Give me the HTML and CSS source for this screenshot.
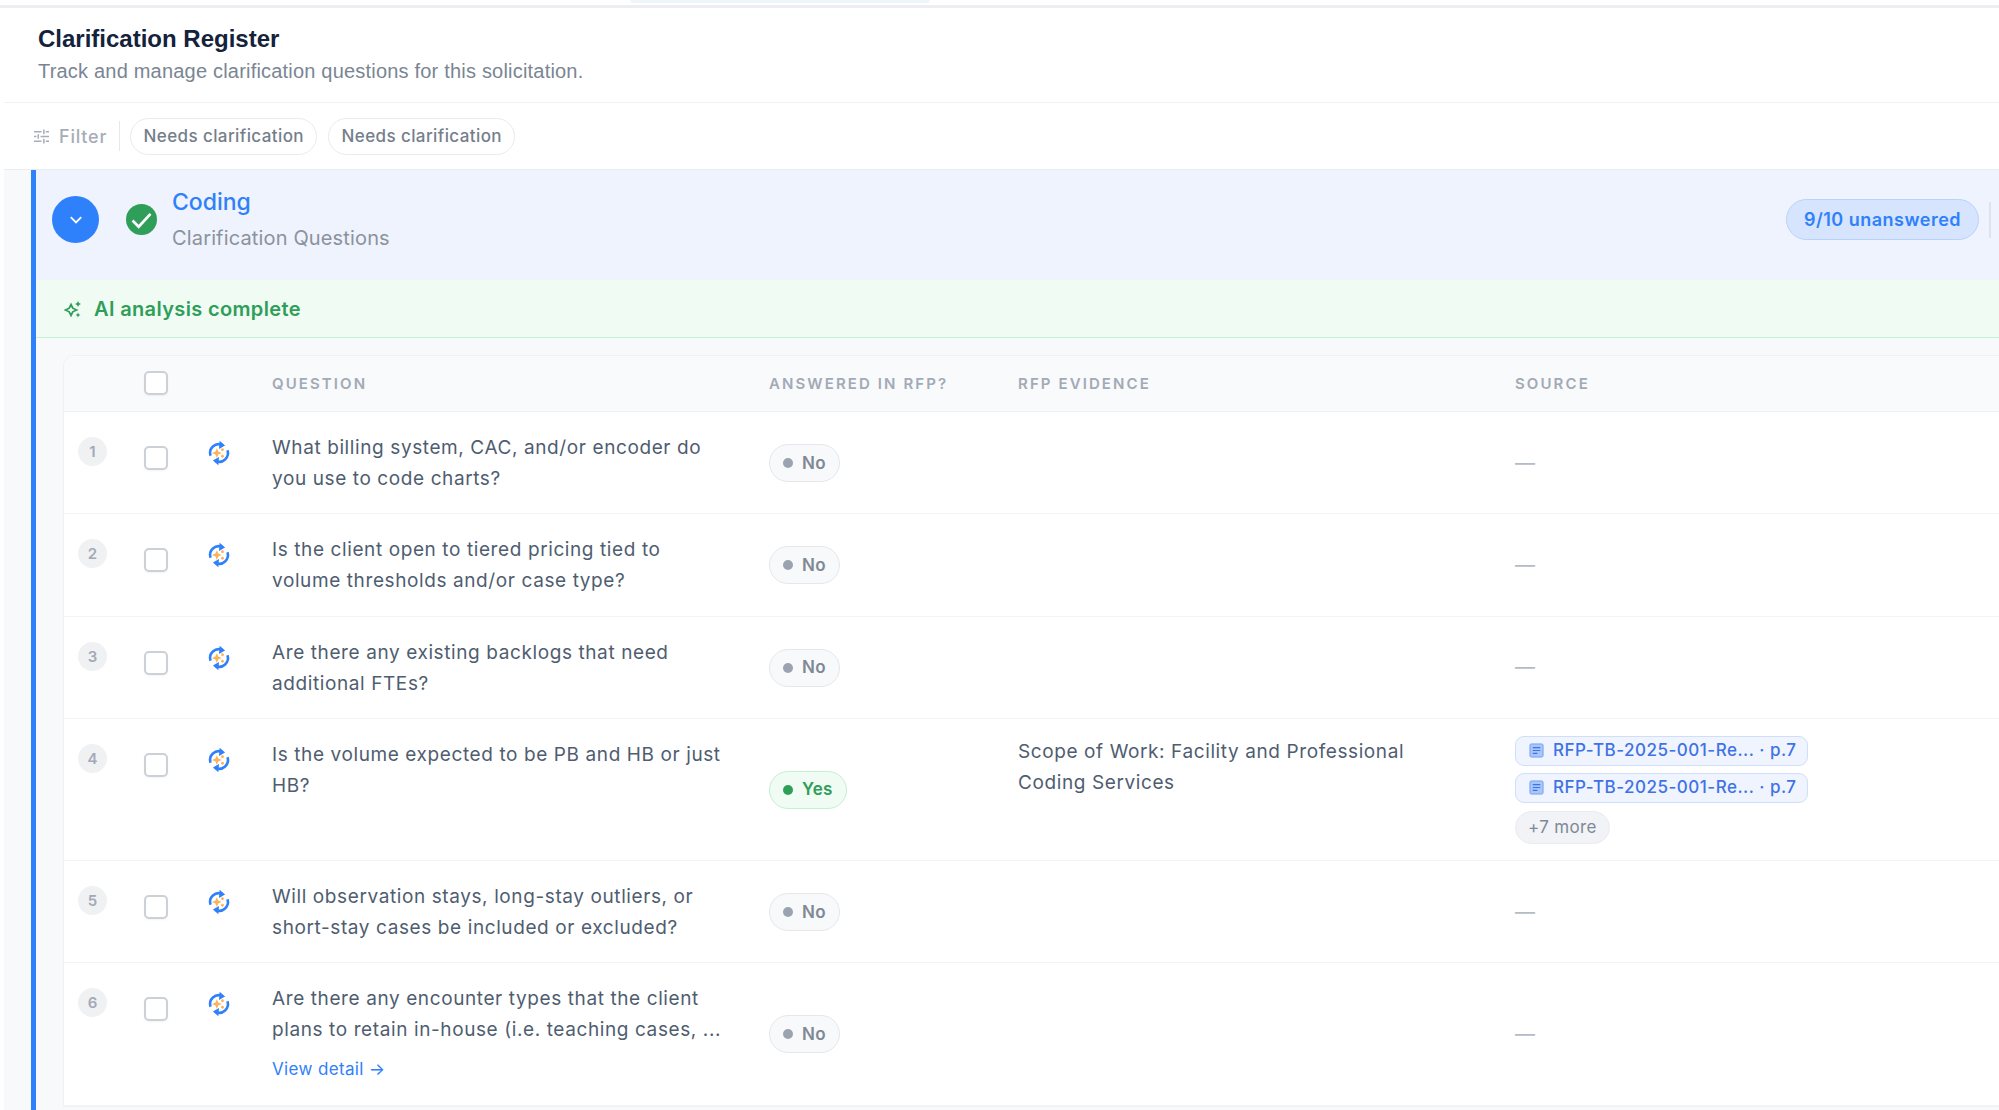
FILE: index.html
```html
<!DOCTYPE html>
<html lang="en">
<head>
  <meta charset="UTF-8">
  <title>Clarification Register</title>
  <link rel="stylesheet" href="styles.css">
</head>
<body>
  <svg class="defs" width="0" height="0">
    <symbol id="sync" viewBox="0 0 24 24">
      <path d="M4.2 14.5A8 8 0 0 1 15 4.6" fill="none" stroke="#2f80fb" stroke-width="2.4"/>
      <path d="M12.6 0.6 17.6 5 12 8.2z" fill="#2f80fb"/>
      <path d="M19.8 9.5A8 8 0 0 1 9 19.4" fill="none" stroke="#2f80fb" stroke-width="2.4"/>
      <path d="M11.4 23.4 6.4 19 12 15.8z" fill="#2f80fb"/>
      <path d="M10 7.5 11.3 10.7 14.5 12 11.3 13.3 10 16.5 8.7 13.3 5.5 12 8.7 10.7z" fill="#f9b45c"/>
      <circle cx="15.2" cy="9" r="1.3" fill="#f9b45c"/>
      <circle cx="15.2" cy="15" r="1.3" fill="#f9b45c"/>
    </symbol>
    <symbol id="doc" viewBox="0 0 16 16">
      <rect x="1" y="1" width="14" height="14" rx="1.5" fill="#a9c6fa" stroke="#6f9ff5"/>
      <path d="M4 5h8M4 8h8M4 11h5" stroke="#3f72e6" stroke-width="1.3"/>
    </symbol>
  </svg>

  <div class="top-strip"><span class="top-glow"></span></div>

  <header class="page-head">
    <h1>Clarification Register</h1>
    <p>Track and manage clarification questions for this solicitation.</p>
  </header>

  <div class="filter-bar">
    <svg class="filter-icon" viewBox="0 0 18 16" width="17" height="15">
      <path d="M1 3h8M13.5 3h3.5M11.5 .5v5M1 8h2.500M8 8h9M5.500 5.500v5M1 13h8M13.500 13h3.500M11.500 10.500v5" stroke="#a6adb8" stroke-width="1.6" fill="none"/>
    </svg>
    <span class="filter-label">Filter</span>
    <span class="filter-sep"></span>
    <span class="filter-chip">Needs clarification</span>
    <span class="filter-chip">Needs clarification</span>
  </div>

  <main class="content">
    <section class="group">
      <div class="group-head">
        <span class="toggle">
          <svg viewBox="0 0 12 8" width="14" height="10"><path d="M1.500 1.500 6 6l4.500-4.500" fill="none" stroke="#fff" stroke-width="1.6"/></svg>
        </span>
        <span class="done">
          <svg viewBox="0 0 20 16" width="23" height="18"><path d="M2 8.500 7.500 14 18 2.500" fill="none" stroke="#fff" stroke-width="2.400"/></svg>
        </span>
        <div class="group-title">
          <h2>Coding</h2>
          <p>Clarification Questions</p>
        </div>
        <span class="count-pill">9/10 unanswered</span>
        <span class="head-sep"></span>
      </div>

      <div class="ai-bar">
        <svg viewBox="0 0 18 18" width="18" height="18">
          <path d="M7 4.500 8.800 8.200 12.500 10 8.800 11.800 7 15.500 5.200 11.800 1.500 10 5.200 8.200z" fill="none" stroke="#2f9e58" stroke-width="1.800"/>
          <path d="M14 1 15 3 17 4 15 5 14 7 13 5 11 4 13 3zM14 12.500 14.800 14.200 16.500 15 14.800 15.800 14 17.500 13.200 15.800 11.500 15 13.200 14.200z" fill="#2f9e58"/>
        </svg>
        <span>AI analysis complete</span>
      </div>

      <div class="table">
        <div class="row head-row">
          <span class="cell-num"></span>
          <span class="box box-head"></span>
          <span class="cell-icon"></span>
          <span class="th">Question</span>
          <span class="th">Answered in RFP?</span>
          <span class="th">RFP Evidence</span>
          <span class="th">Source</span>
        </div>

        <div class="row">
          <span class="num">1</span>
          <span class="box"></span>
          <svg class="sync"><use href="#sync"/></svg>
          <div class="question">What billing system, CAC, and/or encoder do you use to code charts?</div>
          <div class="answer"><span class="badge"><i></i>No</span></div>
          <div class="evidence"></div>
          <div class="source"><span class="dash">—</span></div>
        </div>

        <div class="row">
          <span class="num">2</span>
          <span class="box"></span>
          <svg class="sync"><use href="#sync"/></svg>
          <div class="question">Is the client open to tiered pricing tied to volume thresholds and/or case type?</div>
          <div class="answer"><span class="badge"><i></i>No</span></div>
          <div class="evidence"></div>
          <div class="source"><span class="dash">—</span></div>
        </div>

        <div class="row">
          <span class="num">3</span>
          <span class="box"></span>
          <svg class="sync"><use href="#sync"/></svg>
          <div class="question">Are there any existing backlogs that need additional FTEs?</div>
          <div class="answer"><span class="badge"><i></i>No</span></div>
          <div class="evidence"></div>
          <div class="source"><span class="dash">—</span></div>
        </div>

        <div class="row">
          <span class="num">4</span>
          <span class="box"></span>
          <svg class="sync"><use href="#sync"/></svg>
          <div class="question">Is the volume expected to be PB and HB or just HB?</div>
          <div class="answer"><span class="badge badge-yes"><i></i>Yes</span></div>
          <div class="evidence">Scope of Work: Facility and Professional Coding Services</div>
          <div class="source source-list">
            <span class="doc-chip"><svg width="15" height="15"><use href="#doc"/></svg>RFP-TB-2025-001-Re... · p.7</span>
            <span class="doc-chip"><svg width="15" height="15"><use href="#doc"/></svg>RFP-TB-2025-001-Re... · p.7</span>
            <span class="more-chip">+7 more</span>
          </div>
        </div>

        <div class="row">
          <span class="num">5</span>
          <span class="box"></span>
          <svg class="sync"><use href="#sync"/></svg>
          <div class="question">Will observation stays, long-stay outliers, or short-stay cases be included or excluded?</div>
          <div class="answer"><span class="badge"><i></i>No</span></div>
          <div class="evidence"></div>
          <div class="source"><span class="dash">—</span></div>
        </div>

        <div class="row">
          <span class="num">6</span>
          <span class="box"></span>
          <svg class="sync"><use href="#sync"/></svg>
          <div class="question">
            Are there any encounter types that the client plans to retain in-house (i.e. teaching cases, ...
            <a class="detail" href="#">View detail →</a>
          </div>
          <div class="answer"><span class="badge"><i></i>No</span></div>
          <div class="evidence"></div>
          <div class="source"><span class="dash">—</span></div>
        </div>
      </div>
    </section>
  </main>
</body>
</html>
```

FILE: styles.css
```css
* {
  margin: 0;
  padding: 0;
  box-sizing: border-box;
}

html, body {
  height: 100%;
  overflow: hidden;
}

body {
  font-family: Inter, "Noto Sans", sans-serif;
  background-color: #fff;
  color: #4f5d70;
}

.defs {
  display: block;
  height: 0;
}

.top-strip {
  height: 8px;
  border-bottom: 3px solid #eceef1;
  position: relative;
}

.top-glow {
  position: absolute;
  left: 630px;
  top: 0;
  width: 300px;
  height: 3px;
  background-color: #eef6fc;
  border-radius: 0 0 8px 8px;
}

.page-head {
  height: 95px;
  margin-left: 4px;
  padding: 16px 0 0 34px;
  border-bottom: 1px solid #eef1f5;
}

.page-head h1 {
  font-family: "Liberation Sans", sans-serif;
  font-size: 24px;
  line-height: 30px;
  font-weight: 700;
  color: #14223b;
}

.page-head p {
  font-family: "Liberation Sans", sans-serif;
  font-size: 20px;
  line-height: 24px;
  margin-top: 5px;
  letter-spacing: 0.2px;
  color: #7a8594;
}

.filter-bar {
  height: 66px;
  margin-left: 4px;
  padding-left: 29px;
  display: flex;
  align-items: center;
}

.filter-label {
  margin-left: 9px;
  font-size: 18px;
  font-weight: 500;
  letter-spacing: 0.8px;
  color: #a6adb8;
}

.filter-sep {
  width: 1px;
  height: 30px;
  margin: 0 10px 0 12px;
  background-color: #e5e8ec;
}

.filter-chip {
  height: 37px;
  width: 187px;
  margin-right: 11px;
  display: flex;
  align-items: center;
  justify-content: center;
  border: 1px solid #e8ebef;
  border-radius: 19px;
  font-size: 17px;
  font-weight: 500;
  letter-spacing: 0.4px;
  color: #747e8b;
}

.content {
  margin-left: 4px;
  padding-left: 27px;
  background-color: #f8f9fb;
  border-top: 1px solid #e9edf3;
  height: 1000px;
}

.group {
  border-left: 5px solid #2f80fb;
  min-height: 100%;
}

.group-head {
  height: 110px;
  padding: 0 8px 11px 16px;
  display: flex;
  align-items: center;
  background-color: #eef3fd;
}

.toggle {
  width: 47px;
  height: 47px;
  border-radius: 50%;
  background-color: #2f80fb;
  display: flex;
  align-items: center;
  justify-content: center;
  flex-shrink: 0;
}

.done {
  width: 31px;
  height: 31px;
  margin-left: 27px;
  border-radius: 50%;
  background-color: #2f9e58;
  display: flex;
  align-items: center;
  justify-content: center;
  flex-shrink: 0;
}

.group-title {
  margin: -1px 0 0 15px;
  flex-grow: 1;
}

.group-title h2 {
  font-size: 23px;
  line-height: 30px;
  font-weight: 500;
  color: #2f80fb;
}

.group-title p {
  font-size: 20px;
  line-height: 26px;
  margin-top: 8px;
  letter-spacing: 0.15px;
  color: #8a929d;
}

.count-pill {
  width: 193px;
  height: 41px;
  display: flex;
  align-items: center;
  justify-content: center;
  border: 1px solid #b9d2fb;
  border-radius: 21px;
  background-color: #d6e5fd;
  font-size: 18px;
  font-weight: 600;
  letter-spacing: 0.5px;
  color: #2f80fb;
}

.head-sep {
  width: 2px;
  height: 36px;
  margin-left: 10px;
  background-color: #dfe3e9;
}

.ai-bar {
  height: 58px;
  padding: 1px 0 0 28px;
  display: flex;
  align-items: center;
  gap: 12px;
  background-color: #f0fbf4;
  border-bottom: 1px solid #c4f0d4;
  font-size: 20px;
  font-weight: 600;
  letter-spacing: 0.35px;
  color: #2f9e58;
}

.table {
  margin: 17px 0 0 27px;
  background-color: #fff;
  border: 1px solid #eef1f5;
  border-right: none;
  border-radius: 12px 0 0 0;
}

.row {
  display: grid;
  grid-template-columns: 80px 64px 64px 497px 249px 497px 1fr;
  padding: 20px 0 19.3px;
  border-bottom: 1px solid #f2f4f7;
  font-size: 19px;
  line-height: 31px;
  letter-spacing: 0.6px;
}

.head-row {
  height: 56px;
  padding: 0;
  align-items: center;
  background-color: #f8fafc;
  border-bottom: 1px solid #eef1f5;
  border-radius: 12px 0 0 0;
}

.th {
  font-size: 15px;
  font-weight: 600;
  letter-spacing: 2.1px;
  text-transform: uppercase;
  color: #a2aab5;
}

.num {
  width: 29px;
  height: 29px;
  margin: 5px 0 0 14px;
  border-radius: 50%;
  background-color: #f0f1f3;
  color: #a2aab5;
  font-size: 15px;
  font-weight: 600;
  line-height: 29px;
  text-align: center;
  letter-spacing: 0;
}

.box {
  width: 24px;
  height: 24px;
  margin-top: 14px;
  background-color: #fff;
  border: 2px solid #ccd0d7;
  border-radius: 5px;
  box-shadow: 0 1px 2px rgba(0, 0, 0, 0.05);
}

.box-head {
  margin-top: -2px;
}

.sync {
  width: 26px;
  height: 26px;
  margin: 8px 0 0 -2px;
}

.question {
  padding-right: 40px;
}

.detail {
  display: block;
  margin-top: 12px;
  padding-bottom: 4px;
  font-size: 17px;
  line-height: 24px;
  letter-spacing: 0.35px;
  color: #2f80fb;
  text-decoration: none;
}

.answer, .source {
  display: flex;
  align-items: center;
}

.badge {
  height: 38px;
  padding: 0 13px;
  display: flex;
  align-items: center;
  gap: 9px;
  background-color: #f8f9fa;
  border: 1px solid #e5e7eb;
  border-radius: 19px;
  font-size: 17px;
  font-weight: 600;
  letter-spacing: 0.3px;
  color: #7f8996;
}

.badge i {
  width: 10px;
  height: 10px;
  border-radius: 50%;
  background-color: #9aa3af;
}

.badge-yes {
  background-color: #f0fbf4;
  border-color: #c4f0d4;
  color: #2f9e58;
}

.badge-yes i {
  background-color: #2f9e58;
}

.evidence {
  padding-right: 60px;
  margin-top: -3px;
}

.dash {
  color: #b5bbc4;
  font-size: 20px;
}

.source-list {
  flex-direction: column;
  align-items: flex-start;
  gap: 7px;
  margin: -3px 0 -3px;
}

.doc-chip {
  width: 293px;
  height: 30px;
  padding-left: 13px;
  display: flex;
  align-items: center;
  gap: 9px;
  background-color: #eff4fe;
  border: 1px solid #cfdffb;
  border-radius: 9px;
  font-size: 17px;
  font-weight: 500;
  line-height: 1;
  letter-spacing: 0.5px;
  color: #3f72e6;
}

.more-chip {
  height: 33px;
  margin-top: 1px;
  padding: 0 12px;
  display: flex;
  align-items: center;
  background-color: #f1f3f6;
  border: 1px solid #e8ebef;
  border-radius: 17px;
  font-size: 17px;
  line-height: 1;
  letter-spacing: 0.35px;
  color: #7f8996;
}
```
